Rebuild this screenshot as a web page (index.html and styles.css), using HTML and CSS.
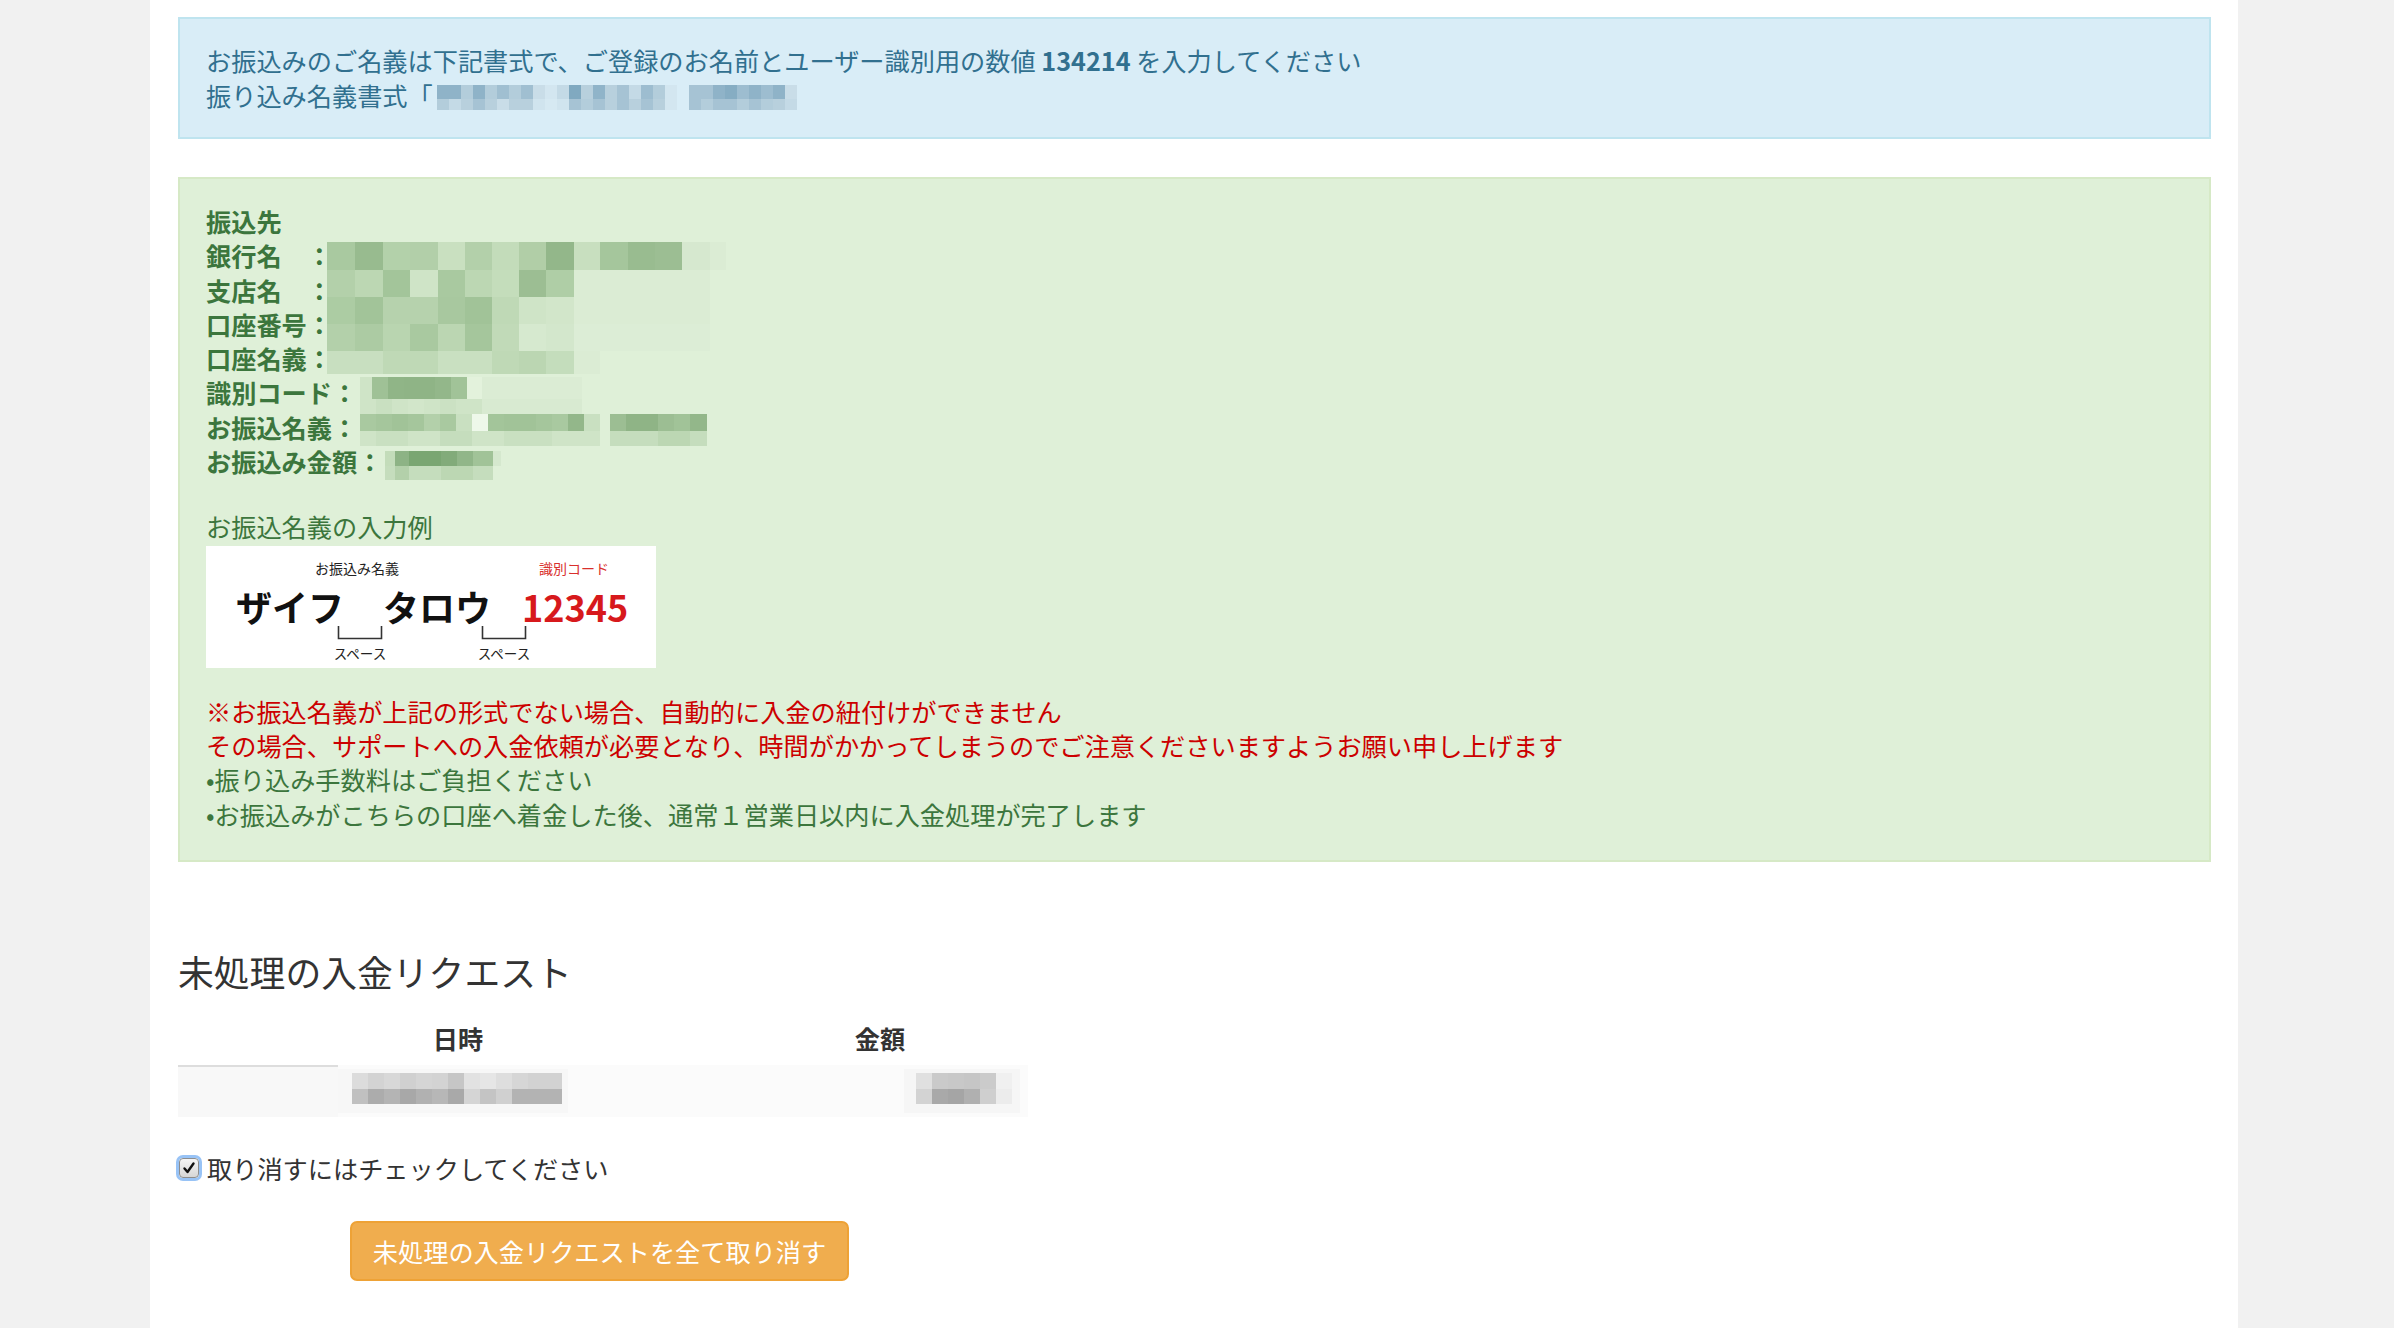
FILE: index.html
```html
<!DOCTYPE html>
<html lang="ja">
<head>
<meta charset="utf-8">
<title>入金</title>
<link rel="stylesheet" href="styles.css">
</head>
<body>
<div class="page">
  <div class="alert alert-info">
    <p>お振込みのご名義は下記書式で、ご登録のお名前とユーザー識別用の数値 <strong>134214</strong> を入力してください</p>
    <p>振り込み名義書式「<svg class="name-mosaic" width="360" height="25" viewBox="0 0 360 25" shape-rendering="crispEdges">
      <rect x="0" y="0" width="12" height="14" fill="#8fb3c8"/><rect x="12" y="0" width="12" height="14" fill="#8fb3c8"/><rect x="24" y="0" width="12" height="14" fill="#b3cddb"/><rect x="36" y="0" width="12" height="14" fill="#8fb3c8"/><rect x="48" y="0" width="12" height="14" fill="#b3cddb"/><rect x="60" y="0" width="12" height="14" fill="#a0bfd1"/><rect x="72" y="0" width="12" height="14" fill="#b3cddb"/><rect x="84" y="0" width="12" height="14" fill="#a0bfd1"/><rect x="96" y="0" width="12" height="14" fill="#c9dde8"/><rect x="108" y="0" width="12" height="14" fill="#d3e6f0"/>
      <rect x="120" y="0" width="12" height="14" fill="#c4dae6"/><rect x="132" y="0" width="12" height="14" fill="#80a9c0"/><rect x="144" y="0" width="12" height="14" fill="#b8d0dd"/><rect x="156" y="0" width="12" height="14" fill="#90b4c9"/><rect x="168" y="0" width="12" height="14" fill="#b8d0dd"/><rect x="180" y="0" width="12" height="14" fill="#a6c3d4"/><rect x="192" y="0" width="12" height="14" fill="#c4dae6"/><rect x="204" y="0" width="12" height="14" fill="#9dbdd0"/><rect x="216" y="0" width="12" height="14" fill="#b3cddb"/><rect x="228" y="0" width="12" height="14" fill="#d3e6f0"/>
      <rect x="252" y="0" width="12" height="14" fill="#a6c3d4"/><rect x="264" y="0" width="12" height="14" fill="#a6c3d4"/><rect x="276" y="0" width="12" height="14" fill="#8fb3c8"/><rect x="288" y="0" width="12" height="14" fill="#86adc3"/><rect x="300" y="0" width="12" height="14" fill="#9dbdd0"/><rect x="312" y="0" width="12" height="14" fill="#8fb3c8"/><rect x="324" y="0" width="12" height="14" fill="#9dbdd0"/><rect x="336" y="0" width="12" height="14" fill="#8fb3c8"/><rect x="348" y="0" width="12" height="14" fill="#c9dde8"/>
      <rect x="0" y="14" width="12" height="11" fill="#b3cddb"/><rect x="12" y="14" width="12" height="11" fill="#c4dae6"/><rect x="24" y="14" width="12" height="11" fill="#b8d0dd"/><rect x="36" y="14" width="12" height="11" fill="#a6c3d4"/><rect x="48" y="14" width="12" height="11" fill="#b8d0dd"/><rect x="60" y="14" width="12" height="11" fill="#c9dde8"/><rect x="72" y="14" width="12" height="11" fill="#b8d0dd"/><rect x="84" y="14" width="12" height="11" fill="#b8d0dd"/><rect x="96" y="14" width="12" height="11" fill="#d0e4ee"/><rect x="108" y="14" width="12" height="11" fill="#d6e9f2"/>
      <rect x="120" y="14" width="12" height="11" fill="#d0e4ee"/><rect x="132" y="14" width="12" height="11" fill="#a6c3d4"/><rect x="144" y="14" width="12" height="11" fill="#b3cddb"/><rect x="156" y="14" width="12" height="11" fill="#a6c3d4"/><rect x="168" y="14" width="12" height="11" fill="#b8d0dd"/><rect x="180" y="14" width="12" height="11" fill="#a6c3d4"/><rect x="192" y="14" width="12" height="11" fill="#b8d0dd"/><rect x="204" y="14" width="12" height="11" fill="#a6c3d4"/><rect x="216" y="14" width="12" height="11" fill="#b8d0dd"/><rect x="228" y="14" width="12" height="11" fill="#d3e6f0"/>
      <rect x="252" y="14" width="12" height="11" fill="#a6c3d4"/><rect x="264" y="14" width="12" height="11" fill="#b3cddb"/><rect x="276" y="14" width="12" height="11" fill="#a6c3d4"/><rect x="288" y="14" width="12" height="11" fill="#a6c3d4"/><rect x="300" y="14" width="12" height="11" fill="#b3cddb"/><rect x="312" y="14" width="12" height="11" fill="#a6c3d4"/><rect x="324" y="14" width="12" height="11" fill="#b3cddb"/><rect x="336" y="14" width="12" height="11" fill="#b8d0dd"/><rect x="348" y="14" width="12" height="11" fill="#c4dae6"/>
    </svg></p>
  </div>

  <div class="alert alert-success">
    <div class="transfer-info">
      <div class="info-line">振込先</div>
      <div class="info-line">銀行名　：</div>
      <div class="info-line">支店名　：</div>
      <div class="info-line">口座番号：</div>
      <div class="info-line">口座名義：</div>
      <div class="info-line">識別コード：</div>
      <div class="info-line">お振込名義：</div>
      <div class="info-line">お振込み金額：</div>
      <svg class="info-mosaic" width="520" height="290" viewBox="0 0 520 290" shape-rendering="crispEdges">
        <g transform="translate(121,38)">
          <rect x="0" y="0" width="28" height="28" fill="#a9c9a0"/><rect x="28" y="0" width="28" height="28" fill="#98bb8f"/><rect x="56" y="0" width="27" height="28" fill="#b3d1aa"/><rect x="83" y="0" width="28" height="28" fill="#b2cfa9"/><rect x="111" y="0" width="27" height="28" fill="#c9e0c0"/><rect x="138" y="0" width="27" height="28" fill="#b3d0aa"/><rect x="165" y="0" width="27" height="28" fill="#c3dcba"/><rect x="192" y="0" width="27" height="28" fill="#b1cea7"/><rect x="219" y="0" width="28" height="28" fill="#93b78a"/><rect x="247" y="0" width="26" height="28" fill="#c8dfbf"/><rect x="273" y="0" width="28" height="28" fill="#a5c69c"/><rect x="301" y="0" width="27" height="28" fill="#99bc90"/><rect x="328" y="0" width="27" height="28" fill="#9cbe93"/><rect x="355" y="0" width="28" height="28" fill="#d6e8cf"/><rect x="383" y="0" width="27" height="28" fill="#dbecd4"/>
          <rect x="0" y="28" width="28" height="27" fill="#b3d0aa"/><rect x="28" y="28" width="28" height="27" fill="#bcd7b3"/><rect x="56" y="28" width="27" height="27" fill="#a3c59a"/><rect x="83" y="28" width="28" height="27" fill="#cfe4c7"/><rect x="111" y="28" width="27" height="27" fill="#a9c9a0"/><rect x="138" y="28" width="27" height="27" fill="#bcd7b3"/><rect x="165" y="28" width="27" height="27" fill="#c4ddbb"/><rect x="192" y="28" width="27" height="27" fill="#9cbe93"/><rect x="219" y="28" width="28" height="27" fill="#afcea6"/><rect x="247" y="28" width="136" height="27" fill="#dbecd4"/>
          <rect x="0" y="55" width="28" height="27" fill="#accca3"/><rect x="28" y="55" width="28" height="27" fill="#a2c499"/><rect x="56" y="55" width="27" height="27" fill="#b6d2ad"/><rect x="83" y="55" width="28" height="27" fill="#b6d2ad"/><rect x="111" y="55" width="27" height="27" fill="#a8c89f"/><rect x="138" y="55" width="27" height="27" fill="#a1c398"/><rect x="165" y="55" width="27" height="27" fill="#bfd9b6"/><rect x="192" y="55" width="27" height="27" fill="#cfe4c7"/><rect x="219" y="55" width="28" height="27" fill="#d2e6ca"/><rect x="247" y="55" width="136" height="27" fill="#dbecd4"/>
          <rect x="0" y="82" width="28" height="27" fill="#b3d0aa"/><rect x="28" y="82" width="28" height="27" fill="#accba3"/><rect x="56" y="82" width="27" height="27" fill="#b9d5b0"/><rect x="83" y="82" width="28" height="27" fill="#a9c9a0"/><rect x="111" y="82" width="27" height="27" fill="#bbd6b2"/><rect x="138" y="82" width="27" height="27" fill="#a5c69c"/><rect x="165" y="82" width="27" height="27" fill="#c1dab8"/><rect x="192" y="82" width="27" height="27" fill="#d6e9cf"/><rect x="219" y="82" width="28" height="27" fill="#d3e7cc"/><rect x="247" y="82" width="136" height="27" fill="#dcedd6"/>
          <rect x="0" y="109" width="56" height="23" fill="#c8dfc0"/><rect x="56" y="109" width="55" height="23" fill="#bfd9b6"/><rect x="111" y="109" width="54" height="23" fill="#c9e0c1"/><rect x="165" y="109" width="27" height="23" fill="#bfd9b6"/><rect x="192" y="109" width="27" height="23" fill="#bbd6b2"/><rect x="219" y="109" width="28" height="23" fill="#c4ddbc"/><rect x="247" y="109" width="26" height="23" fill="#dbecd4"/>
        </g>
        <rect x="154" y="173" width="12" height="22" fill="#cfe4c7"/><rect x="166" y="173" width="16" height="22" fill="#9fc196"/><rect x="182" y="173" width="16" height="22" fill="#90b587"/><rect x="198" y="173" width="31" height="22" fill="#8fb486"/><rect x="229" y="173" width="16" height="22" fill="#93b78a"/><rect x="245" y="173" width="16" height="22" fill="#a1c398"/><rect x="261" y="173" width="15" height="22" fill="#e3f2dc"/><rect x="276" y="173" width="100" height="22" fill="#dbecd4"/>
        <rect x="154" y="195" width="122" height="15" fill="#cfe4c7"/><rect x="170" y="195" width="16" height="15" fill="#c9e0c1"/><rect x="202" y="195" width="16" height="15" fill="#d2e6ca"/><rect x="234" y="195" width="16" height="15" fill="#cbe1c3"/><rect x="276" y="195" width="100" height="15" fill="#d8ead1"/>
        <rect x="154" y="210" width="16" height="17" fill="#a9c9a0"/><rect x="170" y="210" width="16" height="17" fill="#a5c69c"/><rect x="186" y="210" width="16" height="17" fill="#a1c398"/><rect x="202" y="210" width="16" height="17" fill="#a5c69c"/><rect x="218" y="210" width="16" height="17" fill="#b3d0aa"/><rect x="234" y="210" width="16" height="17" fill="#a9c9a0"/><rect x="250" y="210" width="16" height="17" fill="#c9e0c1"/><rect x="266" y="210" width="16" height="17" fill="#eef8ea"/><rect x="282" y="210" width="16" height="17" fill="#a3c59a"/><rect x="298" y="210" width="32" height="17" fill="#a1c398"/><rect x="330" y="210" width="16" height="17" fill="#a5c69c"/><rect x="346" y="210" width="16" height="17" fill="#a9c9a0"/><rect x="362" y="210" width="16" height="17" fill="#93b78a"/><rect x="378" y="210" width="16" height="17" fill="#c9e0c1"/><rect x="404" y="210" width="16" height="17" fill="#9cbe93"/><rect x="420" y="210" width="32" height="17" fill="#8fb486"/><rect x="452" y="210" width="16" height="17" fill="#9cbe93"/><rect x="468" y="210" width="16" height="17" fill="#a1c398"/><rect x="484" y="210" width="17" height="17" fill="#93b78a"/>
        <rect x="154" y="227" width="240" height="15" fill="#cfe4c7"/><rect x="170" y="227" width="32" height="15" fill="#c9e0c1"/><rect x="234" y="227" width="32" height="15" fill="#c5ddbd"/><rect x="298" y="227" width="48" height="15" fill="#c9e0c1"/><rect x="404" y="227" width="97" height="15" fill="#c5ddbd"/><rect x="452" y="227" width="32" height="15" fill="#bcd7b3"/>
        <rect x="179" y="247" width="10" height="15" fill="#c3dcba"/><rect x="189" y="247" width="14" height="15" fill="#8db385"/><rect x="203" y="247" width="32" height="15" fill="#7aa672"/><rect x="235" y="247" width="16" height="15" fill="#82ab7a"/><rect x="251" y="247" width="16" height="15" fill="#91b689"/><rect x="267" y="247" width="20" height="15" fill="#a1c398"/><rect x="287" y="247" width="8" height="15" fill="#d5e8ce"/>
        <rect x="179" y="262" width="108" height="14" fill="#c5ddbd"/><rect x="189" y="262" width="14" height="14" fill="#b3d0aa"/><rect x="235" y="262" width="32" height="14" fill="#bcd7b3"/>
      </svg>
    </div>

    <div class="example">
      <div class="example-title">お振込名義の入力例</div>
      <svg class="example-image" width="450" height="122" viewBox="0 0 450 122">
        <rect width="450" height="122" fill="#ffffff"/>
        <text class="ex-small" x="151" y="28" text-anchor="middle">お振込み名義</text>
        <text class="ex-small ex-red" x="368" y="28" text-anchor="middle">識別コード</text>
        <text class="ex-big" x="30" y="76">ザイフ</text>
        <text class="ex-big" x="177" y="76">タロウ</text>
        <text class="ex-num" x="316" y="76">12345</text>
        <path d="M132.5 80 V92.5 H175.5 V80" fill="none" stroke="#333" stroke-width="1.6"/>
        <path d="M276.5 80 V92.5 H319.5 V80" fill="none" stroke="#333" stroke-width="1.6"/>
        <text class="ex-tiny" x="154" y="113" text-anchor="middle">スペース</text>
        <text class="ex-tiny" x="298" y="113" text-anchor="middle">スペース</text>
      </svg>
    </div>

    <div class="notes">
      <p class="warn">※お振込名義が上記の形式でない場合、自動的に入金の紐付けができません</p>
      <p class="warn">その場合、サポートへの入金依頼が必要となり、時間がかかってしまうのでご注意くださいますようお願い申し上げます</p>
      <p>•振り込み手数料はご負担ください</p>
      <p>•お振込みがこちらの口座へ着金した後、通常１営業日以内に入金処理が完了します</p>
    </div>
  </div>

  <h3 class="section-title">未処理の入金リクエスト</h3>

  <div class="request-table">
    <div class="th"></div>
    <div class="th">日時</div>
    <div class="th"></div>
    <div class="th">金額</div>
    <div class="th"></div>
    <div class="td td-first"></div>
    <div class="td td-rest">
      <svg class="row-mosaic" width="690" height="52" viewBox="0 0 690 52" shape-rendering="crispEdges">
        <rect x="0" y="0" width="690" height="52" fill="#fbfbfb"/>
        <rect x="0" y="4" width="230" height="44" fill="#f7f7f7"/>
        <rect x="566" y="4" width="116" height="44" fill="#f6f6f6"/>
        <rect x="14" y="8" width="16" height="16" fill="#dcdcdc"/><rect x="30" y="8" width="16" height="16" fill="#d3d3d3"/><rect x="46" y="8" width="16" height="16" fill="#d8d8d8"/><rect x="62" y="8" width="16" height="16" fill="#d0d0d0"/><rect x="78" y="8" width="16" height="16" fill="#d5d5d5"/><rect x="94" y="8" width="16" height="16" fill="#d3d3d3"/><rect x="110" y="8" width="16" height="16" fill="#c6c6c6"/><rect x="126" y="8" width="16" height="16" fill="#e2e2e2"/><rect x="142" y="8" width="16" height="16" fill="#e6e6e6"/><rect x="158" y="8" width="16" height="16" fill="#dedede"/><rect x="174" y="8" width="16" height="16" fill="#d6d6d6"/><rect x="190" y="8" width="34" height="16" fill="#d2d2d2"/>
        <rect x="14" y="24" width="16" height="15" fill="#c0c0c0"/><rect x="30" y="24" width="16" height="15" fill="#acacac"/><rect x="46" y="24" width="16" height="15" fill="#b4b4b4"/><rect x="62" y="24" width="16" height="15" fill="#a8a8a8"/><rect x="78" y="24" width="16" height="15" fill="#b1b1b1"/><rect x="94" y="24" width="16" height="15" fill="#b7b7b7"/><rect x="110" y="24" width="16" height="15" fill="#a9a9a9"/><rect x="126" y="24" width="16" height="15" fill="#d5d5d5"/><rect x="142" y="24" width="16" height="15" fill="#c4c4c4"/><rect x="158" y="24" width="16" height="15" fill="#d0d0d0"/><rect x="174" y="24" width="50" height="15" fill="#b3b3b3"/>
        <rect x="578" y="8" width="16" height="16" fill="#e0e0e0"/><rect x="594" y="8" width="16" height="16" fill="#cacaca"/><rect x="610" y="8" width="16" height="16" fill="#c8c8c8"/><rect x="626" y="8" width="16" height="16" fill="#c6c6c6"/><rect x="642" y="8" width="16" height="16" fill="#cbcbcb"/><rect x="658" y="8" width="16" height="16" fill="#f0f0f0"/>
        <rect x="578" y="24" width="16" height="15" fill="#d3d3d3"/><rect x="594" y="24" width="16" height="15" fill="#a9a9a9"/><rect x="610" y="24" width="16" height="15" fill="#a5a5a5"/><rect x="626" y="24" width="16" height="15" fill="#b0b0b0"/><rect x="642" y="24" width="16" height="15" fill="#cfcfcf"/><rect x="658" y="24" width="16" height="15" fill="#ececec"/>
      </svg>
    </div>
  </div>

  <label class="cancel-check">
    <span class="checkbox"><svg width="14" height="14" viewBox="0 0 14 14"><path d="M2.5 7.5 L5.5 11 L11.5 2.5" fill="none" stroke="#111" stroke-width="2.4" stroke-linecap="round" stroke-linejoin="round"/></svg></span>
    <span class="check-label">取り消すにはチェックしてください</span>
  </label>

  <button class="btn-cancel" type="button">未処理の入金リクエストを全て取り消す</button>
</div>
</body>
</html>
```

FILE: styles.css
```css
* {
  box-sizing: border-box;
}

html,
body {
  margin: 0;
  padding: 0;
}

body {
  background: #f1f1f1;
  font-family: "Noto Sans CJK JP", "Noto Sans", sans-serif;
  font-size: 25.2px;
  line-height: 35px;
  color: #333333;
}

.page {
  width: 2088px;
  min-height: 1328px;
  margin-left: 150px;
  background: #ffffff;
  padding: 17px 27px 40px 28px;
}

.alert {
  border: 2px solid transparent;
  padding: 26px;
}

.alert p {
  margin: 0;
}

.alert-info {
  background: #d9edf7;
  border-color: #bfe4ef;
  color: #31708f;
  padding-top: 24px;
  padding-bottom: 24px;
  margin-bottom: 38px;
}

.alert-info strong {
  font-weight: 700;
}

.name-mosaic {
  display: inline-block;
  vertical-align: -4px;
  margin-left: 4px;
}

.alert-success {
  background: #dff0d8;
  border-color: #d6e9c6;
  color: #3c763d;
  line-height: 34.3px;
  padding-top: 25px;
  padding-bottom: 29px;
}

.transfer-info {
  position: relative;
}

.info-line {
  font-weight: 700;
}

.info-mosaic {
  position: absolute;
  left: 0;
  top: 0;
}

.example {
  margin-top: 31px;
}

.example-image {
  display: block;
  margin-top: 2px;
}

.ex-small {
  font-family: "Noto Sans CJK JP", sans-serif;
  font-size: 14px;
  fill: #222222;
}

.ex-tiny {
  font-family: "Noto Sans CJK JP", sans-serif;
  font-size: 13.5px;
  fill: #222222;
}

.ex-red {
  fill: #d9302d;
}

.ex-big {
  font-family: "Noto Sans CJK JP", sans-serif;
  font-size: 36px;
  font-weight: 700;
  fill: #111111;
}

.ex-num {
  font-family: "Noto Sans CJK JP", sans-serif;
  font-size: 36px;
  font-weight: 700;
  fill: #d7191c;
}

.notes {
  margin-top: 26px;
}

.notes p {
  margin: 0;
}

.notes .warn {
  color: #cc0000;
}

.section-title {
  margin: 89px 0 22px;
  font-size: 35.8px;
  line-height: 40px;
  font-weight: 400;
  color: #333333;
}

.request-table {
  display: grid;
  grid-template-columns: 160px 240px 182px 240px 28px;
  width: 850px;
}

.th {
  text-align: center;
  font-weight: 700;
  padding: 8.5px 0;
  height: 52px;
}

.td {
  height: 52px;
}

.td-first {
  background: #f8f8f8;
  border-top: 2px solid #dddddd;
}

.td-rest {
  grid-column: 2 / 6;
}

.row-mosaic {
  display: block;
}

.cancel-check {
  display: flex;
  align-items: center;
  margin-top: 34px;
  height: 35px;
}

.checkbox {
  display: flex;
  align-items: center;
  justify-content: center;
  width: 20px;
  height: 20px;
  margin-left: 1px;
  margin-right: 8px;
  border: 1px solid #8d8d8d;
  border-radius: 4px;
  background: linear-gradient(#f6f6f6, #d6d6d6);
  box-shadow: 0 0 0 3px #98c3f6;
}

.check-label {
  color: #333333;
}

.btn-cancel {
  display: block;
  margin-top: 35.5px;
  margin-left: 172px;
  width: 499px;
  height: 60px;
  padding: 0;
  background: #f0ad4e;
  border: 2px solid #eea236;
  border-radius: 7px;
  color: #ffffff;
  font-family: inherit;
  font-size: 25.2px;
  line-height: 35px;
  text-align: center;
}
```
